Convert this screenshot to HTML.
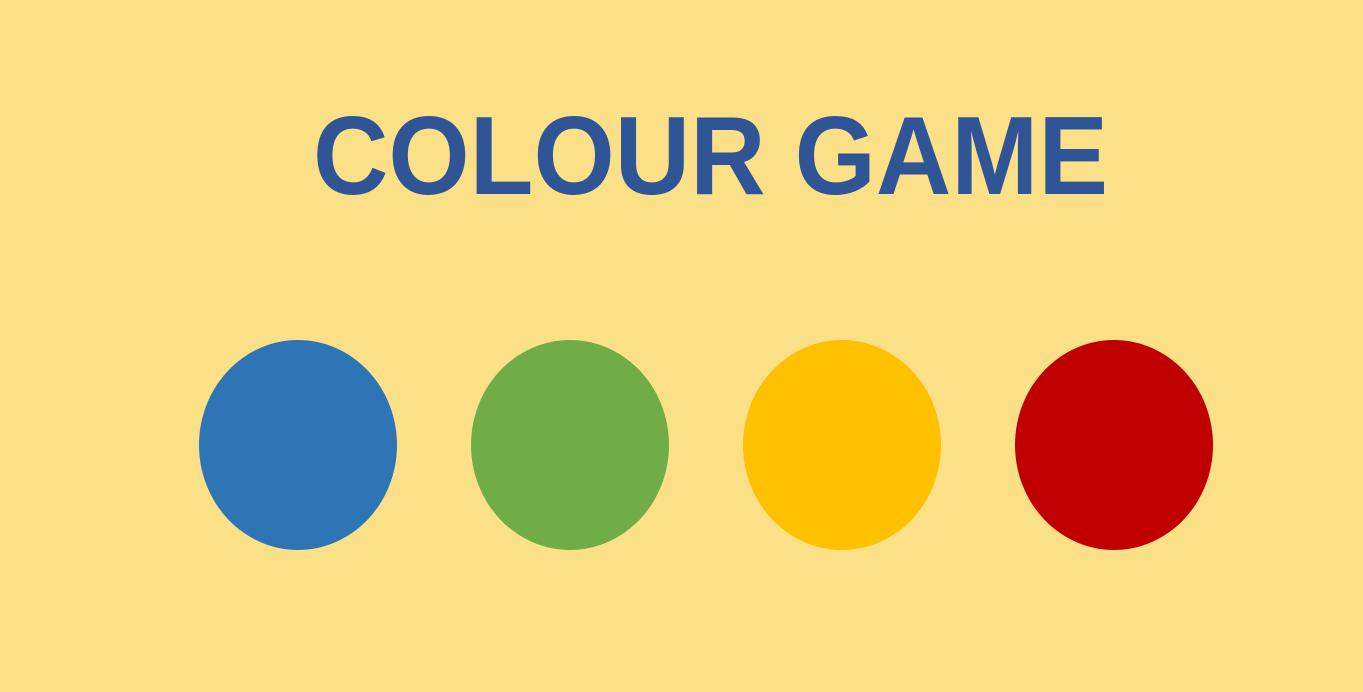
<!DOCTYPE html>
<html><head><meta charset="utf-8"><style>
html,body{margin:0;padding:0;background:#FCE087;}
</style></head><body>
<svg width="1363" height="692" viewBox="0 0 1363 692" xmlns="http://www.w3.org/2000/svg" style="display:block">
<rect width="1363" height="692" fill="#FCE087"/>
<text x="313" y="194" font-family="Liberation Sans, sans-serif" font-weight="bold" font-size="111" fill="#2F5597" textLength="795" lengthAdjust="spacingAndGlyphs">COLOUR GAME</text>
<ellipse cx="298" cy="445" rx="99" ry="105" fill="#2E75B6"/>
<ellipse cx="570" cy="445" rx="99" ry="105" fill="#70AD47"/>
<ellipse cx="842" cy="445" rx="99" ry="105" fill="#FFC000"/>
<ellipse cx="1114" cy="445" rx="99" ry="105" fill="#C00000"/>
</svg>
</body></html>
